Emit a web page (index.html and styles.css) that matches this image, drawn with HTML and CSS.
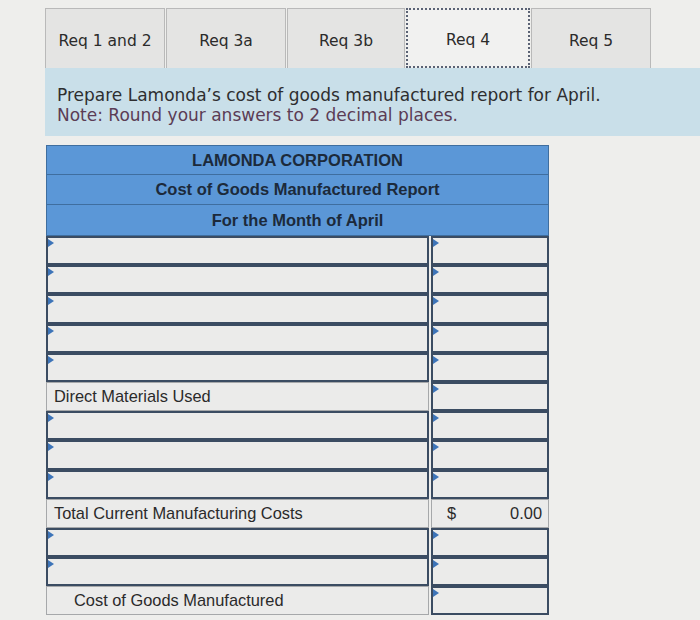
FILE: index.html
```html
<!DOCTYPE html>
<html>
<head>
<meta charset="utf-8">
<link rel="stylesheet" href="styles.css">
</head>
<body>
<div class="page">
  <div class="tabs">
    <div class="tab t1">Req 1 and 2</div>
    <div class="tab t2">Req 3a</div>
    <div class="tab t3">Req 3b</div>
    <div class="tab t4 active">Req 4</div>
    <div class="tab t5">Req 5</div>
  </div>
  <div class="panel">
    <div class="line">Prepare Lamonda’s cost of goods manufactured report for April.</div>
    <div class="line note">Note: Round your answers to 2 decimal places.</div>
  </div>
  <div class="report">
    <div class="head h1">LAMONDA CORPORATION</div>
    <div class="head h2">Cost of Goods Manufactured Report</div>
    <div class="head h3">For the Month of April</div>
    <div class="row"><div class="cell in left"></div><div class="cell in right"></div></div>
    <div class="row"><div class="cell in left"></div><div class="cell in right"></div></div>
    <div class="row"><div class="cell in left"></div><div class="cell in right"></div></div>
    <div class="row"><div class="cell in left"></div><div class="cell in right"></div></div>
    <div class="row"><div class="cell in left"></div><div class="cell in right"></div></div>
    <div class="row"><div class="cell lbl left">Direct Materials Used</div><div class="cell in right"></div></div>
    <div class="row"><div class="cell in left"></div><div class="cell in right"></div></div>
    <div class="row"><div class="cell in left"></div><div class="cell in right"></div></div>
    <div class="row"><div class="cell in left"></div><div class="cell in right"></div></div>
    <div class="row"><div class="cell lbl left">Total Current Manufacturing Costs</div><div class="cell lbl right amt"><span>$</span><span>0.00</span></div></div>
    <div class="row"><div class="cell in left"></div><div class="cell in right"></div></div>
    <div class="row"><div class="cell in left"></div><div class="cell in right"></div></div>
    <div class="row"><div class="cell lbl left indent">Cost of Goods Manufactured</div><div class="cell in right"></div></div>
  </div>
</div>
</body>
</html>
```
FILE: styles.css
```css
html, body {
  margin: 0;
  padding: 0;
  background: #eeeeec;
}
.page {
  width: 700px;
  height: 620px;
  overflow: hidden;
  padding-top: 8px;
  box-sizing: border-box;
}
.tabs {
  display: flex;
  margin-left: 45px;
  height: 60px;
}
.tab {
  box-sizing: border-box;
  height: 60px;
  padding-top: 4px;
  display: flex;
  align-items: center;
  justify-content: center;
  font-family: "DejaVu Sans", Verdana, sans-serif;
  font-size: 15.5px;
  color: #2b2b2b;
  background: #e4e4e3;
  border: 1px solid #b9b9b9;
  border-bottom: none;
  margin-right: 1px;
}
.t1 { width: 120px; }
.t2 { width: 120px; }
.t3 { width: 118px; }
.t4 { width: 124px; }
.t5 { width: 120px; }
.tab.active {
  background: #f1f1f0;
  border: 2px dotted #5a6274;
}
.panel {
  margin-left: 45px;
  height: 68px;
  box-sizing: border-box;
  padding: 17px 0 0 12px;
  background: #c9dfe9;
  font-family: "DejaVu Sans", Verdana, sans-serif;
  font-size: 17px;
  line-height: 20px;
  color: #2e2e30;
}
.note {
  color: #5b3c55;
}
.report {
  margin: 9px 0 0 46px;
  width: 503px;
  font-family: "Liberation Sans", Arial, sans-serif;
}
.head {
  box-sizing: border-box;
  height: 30px;
  background: #5b97d7;
  border: 1px solid #3f6e9f;
  border-top: none;
  display: flex;
  align-items: center;
  justify-content: center;
  font-weight: bold;
  font-size: 16.5px;
  color: #1c2a3b;
}
.head.h1 { border-top: 1px solid #3f6e9f; }
.head.h3 { height: 31px; }
.row {
  display: flex;
  height: 29.2px;
}
.cell {
  box-sizing: border-box;
  height: 100%;
  position: relative;
  background: #ebebea;
}
.left { width: 383px; }
.right { width: 118px; margin-left: 2px; }
.in {
  border: 2px solid #3b4c62;
}
.in::before {
  content: "";
  position: absolute;
  left: 0;
  top: 1px;
  border-left: 6px solid #3d74b8;
  border-top: 4px solid transparent;
  border-bottom: 4px solid transparent;
}
.lbl {
  border: 1px solid #a6a8aa;
  display: flex;
  align-items: center;
  padding-left: 7px;
  font-size: 16.4px;
  color: #2a2a2a;
}
.lbl.indent { padding-left: 27px; }
.amt {
  justify-content: space-between;
  padding: 0 6px 0 15px;
}
```
